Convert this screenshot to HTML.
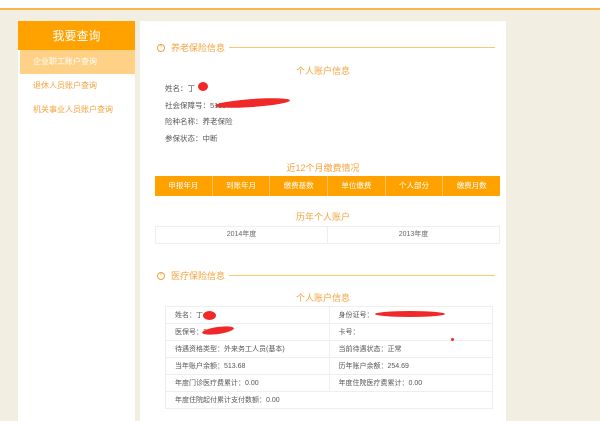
<!DOCTYPE html>
<html><head><meta charset="utf-8"><style>
*{margin:0;padding:0;box-sizing:border-box}
body{width:600px;height:420px;overflow:hidden;background:#f2eee2;font-family:"Liberation Sans","Noto Sans CJK SC",sans-serif;position:relative;font-size:8px;color:#555}
.top{position:absolute;left:0;top:0;width:600px;height:10px;background:#fff;border-bottom:2px solid #fbb64a}
.side{position:absolute;left:18px;top:21px;width:117px;height:400px;background:#fff}
.sh{height:29px;background:#ffa200;color:#fff;font-size:12px;text-align:center;line-height:30px}
.si{height:24px;line-height:24px;padding-left:15px;color:#f5a23c;font-size:8px}
.si.a{background:#ffd187;color:#fff;margin-left:2px;padding-left:13px}
.main{position:absolute;left:140px;top:21px;width:366px;height:400px;background:#fff}
.sec{position:absolute;left:17px;color:#f5a23c;font-size:9px;display:flex;align-items:center;width:338px}
.sec i{width:8px;height:8px;border:1px solid #f5a23c;border-radius:50%;margin-right:6px;font-style:normal;font-size:5px;line-height:6px;text-align:center}
.sec b{flex:1;height:1px;border-top:1px solid #fcc66e;margin-left:4px;font-weight:normal}
.ct{position:absolute;left:0;width:366px;text-align:center;color:#f5a23c;font-size:9px}
.f{position:absolute;left:25px;font-size:7.5px;color:#555}
.ot{position:absolute;left:15px;top:155px;width:345px;height:20px;background:#ffa200;display:flex}
.ot div{flex:1;color:#fff;text-align:center;line-height:20px;font-size:7.5px;border-right:1px solid #ffc35e}
.yt{position:absolute;left:15px;top:205px;width:345px;height:18px;border:1px solid #eee;display:flex}
.yt div{flex:1;text-align:center;line-height:16px;font-size:7px;color:#666}
.yt div:first-child{border-right:1px solid #eee}
.mt{position:absolute;left:25px;top:285px;width:328px;border:1px solid #eee;border-collapse:collapse}
.mt td{border:1px solid #eee;height:17px;padding-left:9px;font-size:7px;color:#555;width:50%}
.red{position:absolute;background:#f02828;border-radius:50%}
</style></head><body>
<div class="top"></div>
<div class="side">
<div class="sh">我要查询</div>
<div class="si a">企业职工账户查询</div>
<div class="si">退休人员账户查询</div>
<div class="si">机关事业人员账户查询</div>
</div>
<div class="main">
<div class="sec" style="top:20px"><i>^</i>养老保险信息<b></b></div>
<div class="ct" style="top:43px">个人账户信息</div>
<div class="f" style="top:62px">姓名：丁</div>
<div class="f" style="top:79px">社会保障号：5110</div>
<div class="f" style="top:95px">险种名称：养老保险</div>
<div class="f" style="top:112px">参保状态：中断</div>
<div class="red" style="left:58px;top:61px;width:10px;height:9px"></div>
<div class="red" style="left:75px;top:78px;width:75px;height:8px;transform:rotate(-4deg)"></div>
<div class="ct" style="top:140px">近12个月缴费情况</div>
<div class="ot"><div>申报年月</div><div>到账年月</div><div>缴费基数</div><div>单位缴费</div><div>个人部分</div><div style="border:0">缴费月数</div></div>
<div class="ct" style="top:189px">历年个人账户</div>
<div class="yt"><div>2014年度</div><div>2013年度</div></div>
<div class="sec" style="top:248px"><i>^</i>医疗保险信息<b></b></div>
<div class="ct" style="top:270px">个人账户信息</div>
<table class="mt">
<tr><td>姓名：丁</td><td>身份证号：</td></tr>
<tr><td>医保号：3</td><td>卡号：</td></tr>
<tr><td>待遇资格类型：外来务工人员(基本)</td><td>当前待遇状态：正常</td></tr>
<tr><td>当年账户余额：513.68</td><td>历年账户余额：254.69</td></tr>
<tr><td>年度门诊医疗费累计：0.00</td><td>年度住院医疗费累计：0.00</td></tr>
<tr><td colspan="2">年度住院起付累计支付数额：0.00</td></tr>
</table>
<div class="red" style="left:63px;top:290px;width:13px;height:9px"></div>
<div class="red" style="left:235px;top:290px;width:70px;height:6px"></div>
<div class="red" style="left:62px;top:306px;width:32px;height:7px;transform:rotate(-8deg)"></div>
<div class="red" style="left:311px;top:317px;width:3px;height:3px"></div>
</div>
</body></html>
